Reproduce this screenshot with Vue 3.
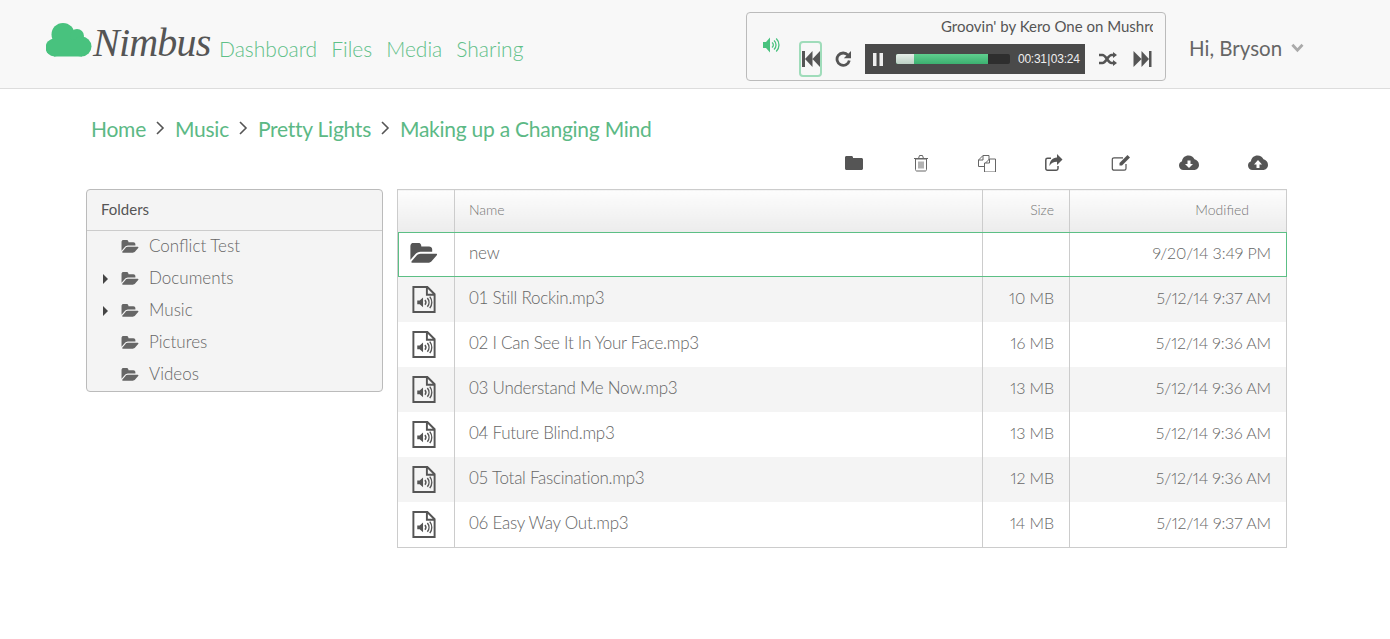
<script setup>
const nav = ['Dashboard', 'Files', 'Media', 'Sharing'];
const crumbs = ['Home', 'Music', 'Pretty Lights', 'Making up a Changing Mind'];
const folders = [
  { name: 'Conflict Test', more: false },
  { name: 'Documents', more: true },
  { name: 'Music', more: true },
  { name: 'Pictures', more: false },
  { name: 'Videos', more: false },
];
const files = [
  { name: '01 Still Rockin.mp3', size: '10 MB', date: '5/12/14 9:37 AM' },
  { name: '02 I Can See It In Your Face.mp3', size: '16 MB', date: '5/12/14 9:36 AM' },
  { name: '03 Understand Me Now.mp3', size: '13 MB', date: '5/12/14 9:36 AM' },
  { name: '04 Future Blind.mp3', size: '13 MB', date: '5/12/14 9:36 AM' },
  { name: '05 Total Fascination.mp3', size: '12 MB', date: '5/12/14 9:36 AM' },
  { name: '06 Easy Way Out.mp3', size: '14 MB', date: '5/12/14 9:37 AM' },
];
const folderOpen = 'M1845 931q0 35-35 74l-336 396q-43 51-120.500 86.500t-143.500 35.500h-1088q-34 0-60.500-13t-26.500-43q0-35 35-74l336-396q43-51 120.500-86.500t143.500-35.500h1088q34 0 60.500 13t26.500 43zm-343-344v160h-832q-94 0-197 47.500t-164 119.500l-337 396-5 6q0-4-.5-12.500t-.5-12.500v-960q0-92 66-158t158-66h320q92 0 158 66t66 158v32h544q92 0 158 66t66 158z';
</script>

<template>
  <div class="page">
    <header class="top">
      <div class="logo">
        <svg class="cloud" width="46" height="34" viewBox="0 0 46 34">
          <g fill="#48c27e">
            <circle cx="17" cy="11.500" r="11.500" />
            <circle cx="31" cy="13" r="7" />
            <circle cx="8.500" cy="24.500" r="9" />
            <circle cx="35.500" cy="23.500" r="10" />
            <rect x="8" y="18" width="28" height="15.500" />
          </g>
        </svg>
        <span class="word">Nimbus</span>
      </div>
      <nav class="nav">
        <a v-for="item in nav" :key="item">{{ item }}</a>
      </nav>

      <div class="player">
        <svg class="vol" width="18" height="16" viewBox="0 0 18 16">
          <path fill="#48c27e" d="M0 5h3l4-4.500v15L3 11H0z" />
          <path fill="none" stroke="#48c27e" stroke-width="1.300" d="M9 5.500a3 3 0 0 1 0 5M11 3.500a6 6 0 0 1 0 9M13.200 1.500a9 9 0 0 1 0 13" />
        </svg>
        <div class="deck">
          <div class="title"><span>Groovin' by Kero One on Mushroom</span></div>
          <div class="controls">
            <div class="prev">
              <svg width="18" height="16" viewBox="0 0 18 16">
                <path fill="#555" d="M0 0h3v16H0zM3 8l7.500-8v16zM10.500 8L18 0v16z" />
              </svg>
            </div>
            <svg class="repeat" width="16" height="16" viewBox="0 0 16 16">
              <path fill="none" stroke="#555" stroke-width="2.800" d="M13 4.200A6.200 6.200 0 1 0 14.300 9.500" />
              <path fill="#555" d="M16 0v7.200H8.800z" />
            </svg>
            <div class="bar">
              <svg class="pause" width="10" height="13" viewBox="0 0 10 13">
                <path fill="#eee" d="M0 0h3.500v13H0zM6.500 0H10v13H6.500z" />
              </svg>
              <div class="track">
                <div class="played"></div>
                <div class="buffer"></div>
              </div>
              <span class="time">00:31 | 03:24</span>
            </div>
            <svg class="shuffle" width="18" height="14" viewBox="0 0 18 14">
              <path fill="none" stroke="#555" stroke-width="2.600" d="M0 3h3.500c3.500 0 5.500 8 9 8H15M0 11h3.500c3.500 0 5.500-8 9-8H15" />
              <path fill="#555" d="M14 0l4 3-4 3zM14 8l4 3-4 3z" />
            </svg>
            <svg class="next" width="19" height="16" viewBox="0 0 18 16">
              <path fill="#555" d="M18 0h-2.500v16H18zM15.500 8L8 0v16zM8 8L0 0v16z" />
            </svg>
          </div>
        </div>
      </div>

      <div class="user">
        <span>Hi, Bryson</span>
        <svg width="14" height="10" viewBox="0 0 14 10">
          <path fill="none" stroke="#aaa" stroke-width="3" d="M1.500 1.500L7 7.500l5.500-6" />
        </svg>
      </div>
    </header>

    <main class="main">
      <div class="crumbs">
        <template v-for="(c, i) in crumbs" :key="c">
          <svg v-if="i" class="sep" width="9" height="14" viewBox="0 0 9 14">
            <path fill="none" stroke="#555" stroke-width="1.600" d="M1 1l6 6-6 6" />
          </svg>
          <a>{{ c }}</a>
        </template>
      </div>

      <div class="tools">
        <svg width="20" height="18" viewBox="0 0 20 18"><path fill="#555" d="M1 5V3.500C1 2.500 1.700 2 2.500 2h5C8.300 2 9 2.500 9 3.500V4h8.500c.8 0 1.500.7 1.500 1.500v9c0 .8-.7 1.500-1.500 1.500h-15C1.700 16 1 15.300 1 14.500z" /></svg>
        <svg width="20" height="18" viewBox="0 0 20 18"><path fill="none" stroke="#666" stroke-width="1" d="M4.500 5h11v10.500c0 .8-.5 1.500-1.200 1.500H5.700c-.7 0-1.200-.7-1.200-1.500zM3 4.500h14M7.500 4.500l1-3h3l1 3M8 7.500v7M10 7.500v7M12 7.500v7" /></svg>
        <svg width="20" height="18" viewBox="0 0 20 18"><path fill="none" stroke="#666" stroke-width="1" d="M7.500 12.500H1.500V6L6 1.500h6V6M6 1.500V6H1.500M8.500 9l4-4h6v13h-11V9h5V5" /></svg>
        <svg width="20" height="18" viewBox="0 0 20 18"><path fill="none" stroke="#555" stroke-width="1.500" d="M14 12v2.500c0 1-.7 1.700-1.700 1.700H3.500c-1 0-1.700-.7-1.700-1.700V6c0-1 .7-1.700 1.700-1.700H7" /><path fill="#555" d="M13 0l5.500 5.500L13 11V7.800C9.500 7.800 7 8.800 5.500 12c0-5 2.800-8.200 7.500-8.500z" /></svg>
        <svg width="20" height="18" viewBox="0 0 20 18"><path fill="none" stroke="#555" stroke-width="1.200" d="M15 10v4.500c0 1-.7 1.700-1.700 1.700H3c-1 0-1.700-.7-1.700-1.700V5.500c0-1 .7-1.700 1.700-1.700h9" /><path fill="#555" d="M16.500 1l2.500 2.500-8 8H8.500V9z" /></svg>
        <svg width="20" height="18" viewBox="0 0 20 18"><path fill="#555" d="M4.500 16C2 16 0 14 0 11.500 0 9.500 1.200 8 3 7.300 3.300 3.800 6 1.500 9.500 1.500c2.700 0 5 1.500 6 3.800C18 5.700 20 8 20 11c0 2.800-2.200 5-5 5z" /><path fill="#fff" d="M8.500 6.500h3V10H14l-4 4-4-4h2.500z" /></svg>
        <svg width="20" height="18" viewBox="0 0 20 18"><path fill="#555" d="M4.500 16C2 16 0 14 0 11.500 0 9.500 1.200 8 3 7.300 3.300 3.800 6 1.500 9.500 1.500c2.700 0 5 1.500 6 3.800C18 5.700 20 8 20 11c0 2.800-2.200 5-5 5z" /><path fill="#fff" d="M8.500 14v-3.500H6l4-4.500 4 4.500h-2.500V14z" /></svg>
      </div>

      <div class="content">
        <aside class="tree">
          <div class="tree-head">Folders</div>
          <div v-for="f in folders" :key="f.name" class="tree-row">
            <span class="caret" :class="{ hidden: !f.more }"></span>
            <svg width="19" height="14" viewBox="0 0 1920 1550">
              <path fill="#666" transform="translate(0 -125)" :d="folderOpen" />
            </svg>
            <span class="tree-name">{{ f.name }}</span>
          </div>
        </aside>

        <table class="files">
          <colgroup>
            <col style="width: 57px" />
            <col style="width: 528px" />
            <col style="width: 87px" />
            <col />
          </colgroup>
          <thead>
            <tr>
              <th></th>
              <th class="left">Name</th>
              <th>Size</th>
              <th class="mod">Modified</th>
            </tr>
          </thead>
          <tbody>
            <tr class="selected">
              <td class="ico">
                <svg width="31" height="22" viewBox="0 0 1920 1550">
                  <path fill="#555" transform="translate(0 -125)" :d="folderOpen" />
                </svg>
              </td>
              <td class="left">new</td>
              <td class="num"></td>
              <td class="num">9/20/14 3:49 PM</td>
            </tr>
            <tr v-for="file in files" :key="file.name">
              <td class="ico">
                <svg width="24" height="27" viewBox="0 0 24 28">
                  <path fill="none" stroke="#555" stroke-width="2" d="M1 1h14.500L23 8.500V27H1zM15 1v8h8" />
                  <path fill="#555" d="M5 15h2.500L11 12v10l-3.500-3H5z" />
                  <path fill="none" stroke="#555" stroke-width="1.500" d="M13 14.500a4 4 0 0 1 0 5M15.500 12.500a7 7 0 0 1 0 9M18 11a10 10 0 0 1 0 12" />
                </svg>
              </td>
              <td class="left">{{ file.name }}</td>
              <td class="num">{{ file.size }}</td>
              <td class="num">{{ file.date }}</td>
            </tr>
          </tbody>
        </table>
      </div>
    </main>
  </div>
</template>

<style>
body {
  background: #fff;
}
</style>

<style scoped>
.page {
  font-family: Lato, "Open Sans", sans-serif;
  color: #666;
}

.top {
  display: flex;
  align-items: flex-start;
  height: 89px;
  box-sizing: border-box;
  padding-left: 46px;
  background: #f8f8f8;
  border-bottom: 1px solid #ddd;
}

.logo {
  display: flex;
  align-items: flex-start;
  margin-top: 23px;
}

.word {
  margin-left: 1px;
  width: 126px;
  font-family: "Liberation Serif", serif;
  font-style: italic;
  font-size: 40px;
  letter-spacing: -0.8px;
  line-height: 40px;
  color: #555;
}

.nav {
  display: flex;
  gap: 14px;
  margin-top: 35px;
  font-size: 21px;
  font-weight: 300;
  line-height: 28px;
  color: #5fc088;
}

.player {
  display: flex;
  align-items: flex-start;
  box-sizing: border-box;
  width: 420px;
  height: 69px;
  margin: 12px 0 0 auto;
  padding: 0 12px 0 16px;
  background: #f7f7f7;
  border: 1px solid #bbb;
  border-radius: 4px;
}

.vol {
  flex: none;
  margin-top: 24px;
}

.deck {
  flex: 1;
  min-width: 0;
  margin-left: 18px;
}

.title {
  height: 28px;
  overflow: hidden;
  white-space: nowrap;
  padding: 2px 0 0 142px;
  box-sizing: border-box;
  font-size: 15px;
  line-height: 22px;
  color: #555;
}

.controls {
  display: flex;
  align-items: center;
  height: 36px;
}

.controls > svg,
.prev,
.bar {
  flex: none;
}

.prev {
  display: flex;
  align-items: center;
  justify-content: center;
  box-sizing: border-box;
  width: 23px;
  height: 36px;
  border: 2px solid #9fdcba;
  border-radius: 4px;
}

.repeat {
  margin-left: 13px;
}

.bar {
  display: flex;
  align-items: center;
  width: 220px;
  height: 30px;
  margin: 0 14px;
  background: #4a4a4a;
}

.pause {
  margin-left: 8px;
}

.track {
  position: relative;
  width: 114px;
  height: 10px;
  margin-left: 13px;
  background: #2e2e2e;
  border-radius: 2px;
  overflow: hidden;
}

.played {
  width: 92px;
  height: 100%;
  background: linear-gradient(#5fd08f, #3cb070);
}

.buffer {
  position: absolute;
  top: 0;
  left: 0;
  width: 18px;
  height: 100%;
  background: linear-gradient(#e6efe9, #bcd0c4);
}

.time {
  flex: none;
  margin-left: 8px;
  font-family: "Liberation Sans", sans-serif;
  font-size: 12px;
  color: #eee;
  white-space: nowrap;
  word-spacing: -2.500px;
  letter-spacing: -0.25px;
}

.next {
  margin-left: 16px;
}

.user {
  display: flex;
  flex: none;
  align-items: center;
  gap: 9px;
  width: 115px;
  margin: 34px 86px 0 23px;
  font-size: 20.500px;
  line-height: 28px;
  white-space: nowrap;
  color: #666;
}

.main {
  width: 1201px;
  margin-left: 86px;
}

.crumbs {
  display: flex;
  align-items: center;
  gap: 10px;
  height: 30px;
  margin-top: 24px;
  padding-left: 5px;
  font-size: 21px;
  letter-spacing: -0.25px;
  color: #5cb985;
}

.tools {
  display: flex;
  justify-content: flex-end;
  gap: 46.670px;
  height: 18px;
  margin-top: 11px;
  padding-right: 19px;
}

.tools svg:nth-child(n + 6) {
  margin-left: 2px;
}

.content {
  display: flex;
  align-items: flex-start;
  gap: 14px;
  margin-top: 17px;
}

.tree {
  box-sizing: border-box;
  width: 297px;
  flex: none;
  background: #f4f4f4;
  border: 1px solid #bbb;
  border-radius: 4px;
}

.tree-head {
  box-sizing: border-box;
  height: 41px;
  padding-left: 14px;
  border-bottom: 1px solid #ccc;
  font-size: 15px;
  line-height: 39px;
  color: #555;
}

.tree-row {
  display: flex;
  align-items: center;
  height: 32px;
  padding-left: 16px;
  font-size: 17px;
  font-weight: 300;
  color: #666;
}

.tree-row svg {
  margin: 0 9px 0 13px;
}

.tree-name {
  margin-bottom: 3px;
}

.caret {
  width: 0;
  height: 0;
  border-left: 5px solid #444;
  border-top: 5px solid transparent;
  border-bottom: 5px solid transparent;
}

.caret.hidden {
  visibility: hidden;
}

.files {
  flex: 1;
  table-layout: fixed;
  border-collapse: collapse;
  border: 1px solid #ccc;
  font-weight: 300;
}

.files th {
  box-sizing: border-box;
  height: 42px;
  padding: 0 15px 3px;
  border-left: 1px solid #ccc;
  background: linear-gradient(#fdfdfd, #ececec);
  font-size: 14px;
  font-weight: 300;
  color: #777;
  text-align: right;
}

.files th.mod {
  padding-right: 37px;
}

.files td {
  box-sizing: border-box;
  height: 45px;
  padding: 0 15px 4px;
  border-left: 1px solid #ccc;
  font-size: 17px;
  letter-spacing: -0.26px;
  color: #666;
  text-align: right;
}

.files tbody tr:last-child td {
  height: 46px;
}

.files td.num {
  font-size: 16px;
  font-variant-numeric: proportional-nums;
  letter-spacing: -0.1px;
}

.files .left {
  padding-left: 14px;
  text-align: left;
}

.files td.ico {
  padding: 0 4px 0 0;
  text-align: center;
}

.ico svg {
  display: block;
  margin: 0 auto;
}

.files tbody tr:nth-child(even) td {
  background: #f4f4f4;
}

.selected {
  outline: 1px solid #5cbf85;
  outline-offset: -1px;
}
</style>
